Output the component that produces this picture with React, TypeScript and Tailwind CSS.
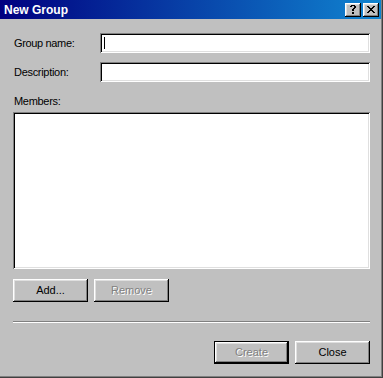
import React from "react";

const raised =
  "shadow-[inset_-1px_-1px_#000000,inset_1px_1px_#ffffff,inset_-2px_-2px_#808080,inset_2px_2px_#dfdfdf]";
const sunken =
  "shadow-[inset_1px_1px_#808080,inset_-1px_-1px_#ffffff,inset_2px_2px_#000000,inset_-2px_-2px_#dfdfdf]";

function Btn({
  label,
  disabled,
  isDefault,
}: {
  label: string;
  disabled?: boolean;
  isDefault?: boolean;
}) {
  const inner = (
    <div
      className={`flex-1 h-full flex items-center justify-center bg-[#c0c0c0] ${raised}`}
    >
      <span
        className={
          disabled
            ? "text-[#808080] [text-shadow:1px_1px_0_#ffffff]"
            : "text-black"
        }
      >
        {label}
      </span>
    </div>
  );
  if (isDefault) {
    return (
      <div className="w-[75px] h-[23px] border border-black flex">{inner}</div>
    );
  }
  return <div className="w-[75px] h-[23px] flex">{inner}</div>;
}

function HelpIcon() {
  const rows = [
    "..####..",
    ".##..##.",
    ".....##.",
    "....##..",
    "...##...",
    "...##...",
    "........",
    "...##...",
    "...##...",
  ];
  return (
    <svg width="8" height="9" viewBox="0 0 8 9" shapeRendering="crispEdges">
      {rows.flatMap((r, y) =>
        r.split("").map((c, x) =>
          c === "#" ? <rect key={`${x}-${y}`} x={x} y={y} width="1" height="1" fill="#000" /> : null
        )
      )}
    </svg>
  );
}

function CloseIcon() {
  const rows = [
    "##....##",
    ".##..##.",
    "..####..",
    "...##...",
    "..####..",
    ".##..##.",
    "##....##",
  ];
  return (
    <svg width="8" height="7" viewBox="0 0 8 7" shapeRendering="crispEdges">
      {rows.flatMap((r, y) =>
        r.split("").map((c, x) =>
          c === "#" ? <rect key={`${x}-${y}`} x={x} y={y} width="1" height="1" fill="#000" /> : null
        )
      )}
    </svg>
  );
}

export default function App() {
  return (
    <div
      className="w-[383px] h-[378px] bg-[#c0c0c0] flex flex-col text-[11px] text-black shadow-[inset_-1px_-1px_#404040,inset_-2px_-2px_#808080] pr-[2px] pb-[2px]"
      style={{ fontFamily: '"Liberation Sans", Arial, sans-serif' }}
    >
      {/* Title bar */}
      <div className="h-[19px] flex items-center bg-[linear-gradient(to_right,#000080,#1084d0)] pl-[4px] pr-[2px]">
        <span className="flex-1 text-white font-bold text-[12px] leading-none">
          New Group
        </span>
        <div className="flex gap-[2px]">
          <div
            className={`w-[16px] h-[14px] bg-[#c0c0c0] flex items-center justify-center ${raised}`}
          >
            <HelpIcon />
          </div>
          <div
            className={`w-[16px] h-[14px] bg-[#c0c0c0] flex items-center justify-center ${raised}`}
          >
            <CloseIcon />
          </div>
        </div>
      </div>

      {/* Body */}
      <div className="flex-1 flex flex-col pl-[13px] pr-[11px] pt-[14px]">
        <div className="flex items-center h-[20px]">
          <span className="w-[87px] pl-px tracking-[-0.35px]">Group name:</span>
          <div className={`flex-1 h-full bg-white flex items-center pl-[4px] ${sunken}`}>
            <div className="w-px h-[12px] bg-black" />
          </div>
        </div>
        <div className="flex items-center h-[20px] mt-[9px]">
          <span className="w-[87px] pl-px tracking-[-0.3px]">Description:</span>
          <div className={`flex-1 h-full bg-white ${sunken}`} />
        </div>
        <div className="mt-[12px] h-[14px] leading-[14px] pl-px tracking-[-0.3px]">
          Members:
        </div>
        <div className={`mt-[4px] h-[157px] bg-white ${sunken}`} />
        <div className="mt-[10px] flex gap-[6px]">
          <Btn label="Add..." />
          <Btn label="Remove" disabled />
        </div>
        <div className="mt-[19px] h-[2px] border-t border-[#808080] border-b border-b-white" />
        <div className="mt-[18px] flex justify-end gap-[6px]">
          <Btn label="Create" disabled isDefault />
          <Btn label="Close" />
        </div>
      </div>
    </div>
  );
}
